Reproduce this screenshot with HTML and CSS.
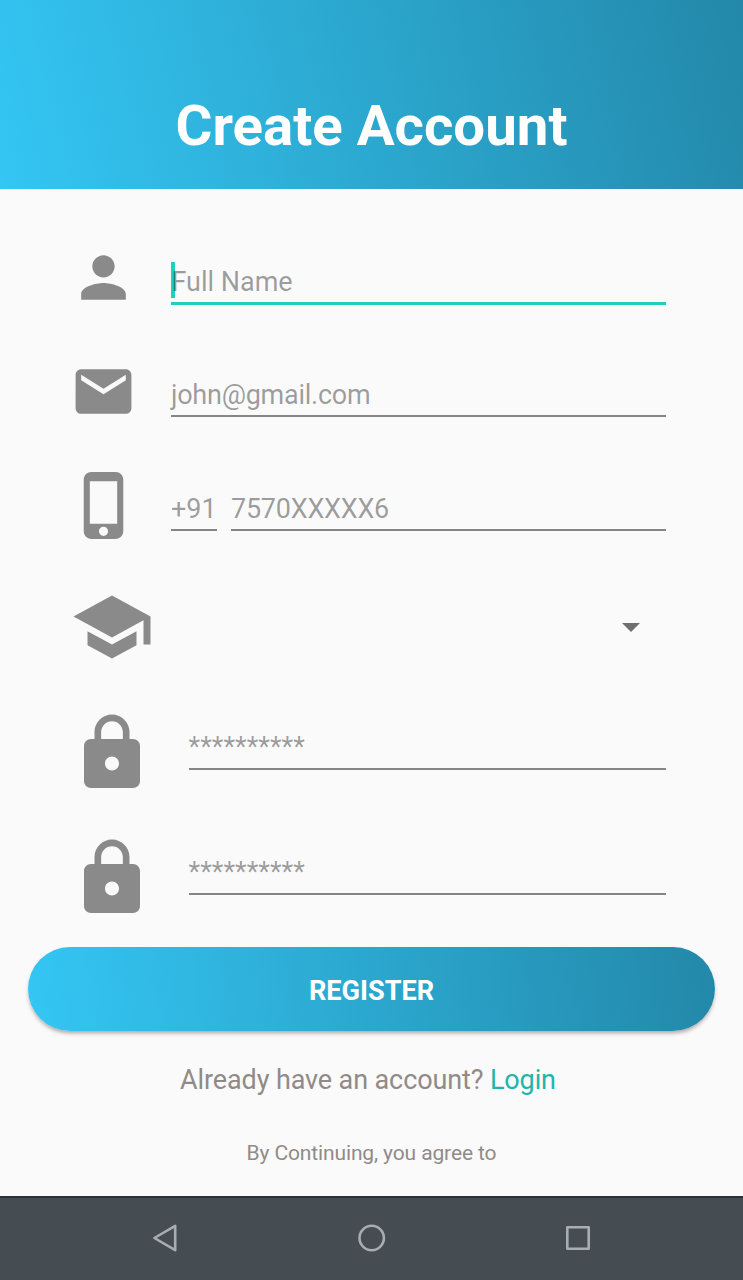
FILE: index.html
```html
<!DOCTYPE html>
<html lang="en">
<head>
<meta charset="utf-8">
<title>Create Account</title>
<link rel="stylesheet" href="styles.css">
</head>
<body>
<div class="screen">
  <header class="header"><h1 class="title">Create Account</h1></header>
  <main class="form">
    <div class="row">
      <div class="icon-cell"><svg class="icon" viewBox="0 0 24 24"><path d="M12 12c2.21 0 4-1.79 4-4s-1.79-4-4-4-4 1.79-4 4 1.79 4 4 4zm0 2c-2.67 0-8 1.34-8 4v2h16v-2c0-2.66-5.33-4-8-4z"/></svg></div>
      <div class="field field-focused"><span class="caret"></span><span class="hint hint-name">Full Name</span></div>
    </div>
    <div class="row">
      <div class="icon-cell"><svg class="icon" viewBox="0 0 24 24"><path d="M20 4H4c-1.1 0-1.99.9-1.99 2L2 18c0 1.1.9 2 2 2h16c1.1 0 2-.9 2-2V6c0-1.1-.9-2-2-2zm0 4l-8 5-8-5V6l8 5 8-5v2z"/></svg></div>
      <div class="field"><span class="hint hint-tight">john@gmail.com</span></div>
    </div>
    <div class="row row-phone">
      <div class="icon-cell"><svg class="icon icon-phone" viewBox="-.5 0 24 24"><path d="M15.5 1h-8C6.12 1 5 2.12 5 3.5v17C5 21.88 6.12 23 7.5 23h8c1.38 0 2.5-1.12 2.5-2.5v-17C18 2.12 16.88 1 15.5 1zm-4 21c-.83 0-1.5-.67-1.5-1.5s.67-1.5 1.5-1.5 1.5.67 1.5 1.5-.67 1.5-1.5 1.5zm4.5-4H7V4h9v14z"/></svg></div>
      <div class="field field-code"><span class="hint">+91</span></div>
      <div class="field"><span class="hint hint-tight">7570XXXXX6</span></div>
    </div>
    <div class="row row-select">
      <div class="icon-cell icon-cell-wide"><svg class="icon icon-large" viewBox="0 0 24 24"><path d="M5 13.18v4L12 21l7-3.82v-4L12 17l-7-3.82zM12 3L1 9l11 6 9-4.91V17h2V9L12 3z"/></svg></div>
      <div class="select"><svg class="arrow" viewBox="0 0 18 9"><path d="M0 0h18L9 9z"/></svg></div>
    </div>
    <div class="row row-password">
      <div class="icon-cell icon-cell-wide"><svg class="icon icon-large" viewBox="0 0 24 24"><path d="M18 8h-1V6c0-2.76-2.24-5-5-5S7 3.24 7 6v2H6c-1.1 0-2 .9-2 2v10c0 1.1.9 2 2 2h12c1.1 0 2-.9 2-2V10c0-1.1-.9-2-2-2zm-6 9c-1.1 0-2-.9-2-2s.9-2 2-2 2 .9 2 2-.9 2-2 2zm3.1-9H8.9V6c0-1.71 1.39-3.1 3.1-3.1 1.71 0 3.1 1.39 3.1 3.1v2z"/></svg></div>
      <div class="field field-short"><span class="hint">**********</span></div>
    </div>
    <div class="row row-confirm">
      <div class="icon-cell icon-cell-wide"><svg class="icon icon-large" viewBox="0 0 24 24"><path d="M18 8h-1V6c0-2.76-2.24-5-5-5S7 3.24 7 6v2H6c-1.1 0-2 .9-2 2v10c0 1.1.9 2 2 2h12c1.1 0 2-.9 2-2V10c0-1.1-.9-2-2-2zm-6 9c-1.1 0-2-.9-2-2s.9-2 2-2 2 .9 2 2-.9 2-2 2zm3.1-9H8.9V6c0-1.71 1.39-3.1 3.1-3.1 1.71 0 3.1 1.39 3.1 3.1v2z"/></svg></div>
      <div class="field field-short"><span class="hint">**********</span></div>
    </div>
  </main>
  <button class="register" type="button">REGISTER</button>
  <p class="login">Already have an account? <a class="login-link">Login</a></p>
  <p class="terms">By Continuing, you agree to</p>
  <nav class="navbar">
    <svg class="nav-icon" viewBox="0 0 30 30"><path d="M25.2 2.8v24.4L4.4 15z"/></svg>
    <svg class="nav-icon" viewBox="0 0 30 30"><circle cx="14.7" cy="15" r="12.2"/></svg>
    <svg class="nav-icon" viewBox="0 0 30 30"><rect x="4.3" y="4.3" width="21.4" height="21.4"/></svg>
  </nav>
</div>
</body>
</html>
```

FILE: styles.css
```css
* { box-sizing: border-box; }

body {
  margin: 0;
  background: #fafafa;
  font-family: Roboto, "Liberation Sans", sans-serif;
}

.screen {
  display: flex;
  flex-direction: column;
  width: 743px;
  height: 1280px;
  overflow: hidden;
}

.header {
  display: flex;
  flex: none;
  justify-content: center;
  align-items: flex-end;
  height: 188.5px;
  padding-bottom: 30px;
  background: linear-gradient(75.7deg, #34c6f4, #2388a9);
}

.title {
  margin: 0;
  color: #fff;
  font-size: 56.4px;
  line-height: 66px;
  font-weight: 700;
}

.form {
  flex: none;
  height: 758.5px;
  padding: 32.5px 77px 0 70px;
}

.row {
  display: flex;
  align-items: center;
  height: 113.6px;
}

.row-phone { padding-top: 2px; }
.row-select { height: 131px; }
.row-password { height: 120px; }
.row-confirm { height: 130.4px; }

.icon-cell { display: flex; flex: none; width: 101px; }
.icon-cell-wide { width: 118.5px; }

.icon { width: 67px; height: 67px; fill: #8a8a8a; }
.icon-phone { width: 73px; height: 73px; margin-left: -3px; }
.icon-large { width: 84px; height: 84px; }

.field {
  position: relative;
  display: flex;
  flex: 1;
  align-items: flex-end;
  height: 51px;
  padding-bottom: 4px;
  border-bottom: 2px solid #858585;
}

.field-focused {
  height: 54px;
  border-bottom: 3px solid #1fd0bd;
}

.field-code {
  flex: none;
  width: 46px;
  margin-right: 14px;
}

.field-short { height: 40px; margin-bottom: 6px; padding-bottom: 5px; }

.hint {
  position: relative;
  color: rgba(0, 0, 0, .39);
  font-size: 27px;
  line-height: 32px;
  white-space: nowrap;
}

.hint-name { left: .4px; }
.hint-tight { letter-spacing: -.25px; }

/* Text cursor behind the translucent placeholder. */
.caret {
  position: absolute;
  left: 0;
  bottom: 4px;
  width: 4px;
  height: 36px;
  background: #1fd0bd;
}

.select {
  display: flex;
  flex: 1;
  justify-content: flex-end;
  padding-right: 26px;
}

.arrow { width: 18px; height: 9px; fill: #6f6f6f; }

.register {
  flex: none;
  height: 84px;
  margin: 0 28px;
  border: 0;
  border-radius: 42px;
  background: linear-gradient(83deg, #34c6f4, #2388a9);
  box-shadow: 0 3px 4px -1px rgba(60, 20, 20, .4);
  color: #fff;
  font: 700 27.1px/32px Roboto, "Liberation Sans", sans-serif;
  padding: 3px 0 0;
}

.login {
  margin: 33px 0 0;
  padding-right: 7px;
  color: #918a88;
  font-size: 27px;
  letter-spacing: -.12px;
  line-height: 32px;
  text-align: center;
}

.login-link { color: #1fb5ac; }

.terms {
  margin: 44px 0 0;
  color: #918a88;
  font-size: 21px;
  letter-spacing: -.13px;
  line-height: 26px;
  text-align: center;
}

.navbar {
  display: flex;
  flex: none;
  justify-content: center;
  align-items: center;
  gap: 176.5px;
  height: 84px;
  margin-top: auto;
  padding-bottom: 2px;
  border-top: 2px solid #2b3237;
  background: #454c52;
}

.nav-icon {
  width: 30px;
  height: 30px;
  fill: none;
  stroke: #a9adb0;
  stroke-width: 2.6;
  stroke-linejoin: round;
}
```
